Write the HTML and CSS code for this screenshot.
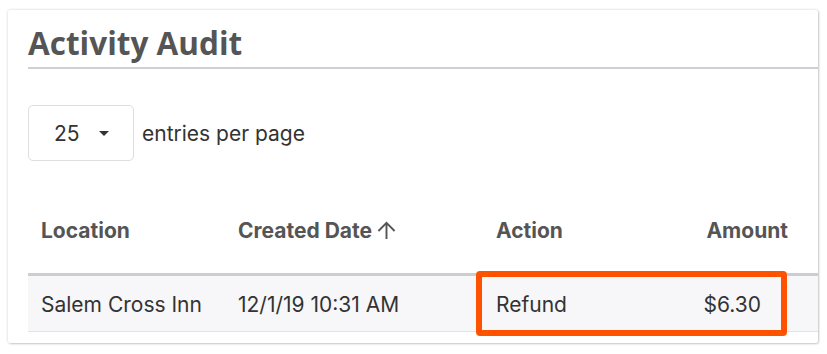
FILE: index.html
```html
<!DOCTYPE html>
<html lang="en">
<head>
    <meta charset="UTF-8">
    <meta name="viewport" content="width=device-width, initial-scale=1.0">
    <title>Activity Audit</title>
    <link rel="stylesheet" href="styles.css">
</head>
<body>
    <div class="card">
        <h1 class="card-title">Activity Audit</h1>
        <div class="page-size">
            <div class="select">
                <span>25</span>
                <span class="caret"></span>
            </div>
            <span class="page-size-label">entries per page</span>
        </div>
        <div class="audit-table">
            <div class="audit-row head">
                <div class="cell">Location</div>
                <div class="cell">Created Date <svg class="sort-icon" viewBox="0 0 20 20"><path d="M10 19V2M1.5 10.5L10 2L18.5 10.5" fill="none" stroke="#555" stroke-width="2"/></svg></div>
                <div class="cell">Action</div>
                <div class="cell amount">Amount</div>
            </div>
            <div class="audit-row body">
                <div class="cell">Salem Cross Inn</div>
                <div class="cell">12/1/19 10:31 AM</div>
                <div class="cell">Refund</div>
                <div class="cell amount">$6.30</div>
                <div class="highlight"></div>
            </div>
        </div>
    </div>
</body>
</html>
```

FILE: styles.css
```css
body {
    margin: 0;
    padding: 10px 9px 11px 8px;
    background-color: #fff;
    font-family: 'Inter', 'Liberation Sans', sans-serif;
    color: #333;
}
.card {
    height: 333px;
    box-sizing: border-box;
    padding: 0 0 0 20px;
    background-color: #fff;
    box-shadow: 0 0 3px rgba(0, 0, 0, 0.18), 1px 1px 2px rgba(0, 0, 0, 0.15);
    border-radius: 2px;
}
.card-title {
    margin: 0;
    padding: 15px 0 6px 0;
    font-family: 'Open Sans', 'Liberation Sans', sans-serif;
    font-size: 31.5px;
    font-weight: 700;
    line-height: 36px;
    color: #555;
    border-bottom: 2px solid #cfcfd6;
}
.page-size {
    display: flex;
    align-items: center;
    margin-top: 36px;
}
.select {
    width: 106px;
    height: 56px;
    box-sizing: border-box;
    border: 1px solid #dddde2;
    border-radius: 5px;
    display: flex;
    align-items: center;
    padding-left: 25px;
    font-size: 21px;
    color: #333;
}
.caret {
    margin-left: 19px;
    width: 0;
    height: 0;
    border-left: 5px solid transparent;
    border-right: 5px solid transparent;
    border-top: 5px solid #333;
}
.page-size-label {
    margin-left: 8px;
    font-size: 21px;
    color: #333;
}
.audit-table {
    margin-top: 44px;
}
.audit-row {
    display: grid;
    grid-template-columns: 197px 258px 1fr 200px;
    position: relative;
}
.audit-row .cell {
    padding-left: 13px;
    display: flex;
    align-items: center;
    line-height: 26px;
}
.audit-row.head {
    height: 55px;
    padding-top: 13px;
    align-items: start;
    border-bottom: 3px solid #cdcdd1;
    font-weight: 700;
    font-size: 21px;
    color: #555;
}
.audit-row.head .amount {
    justify-content: flex-end;
    padding-right: 30px;
}
.sort-icon {
    width: 19px;
    height: 19px;
    flex-shrink: 0;
    margin-left: 5px;
    margin-top: -2px;
}
.audit-row.body {
    height: 52px;
    padding-top: 3px;
    align-items: center;
    background-color: #f7f7f9;
    border-bottom: 1px solid #e3e3e6;
    font-size: 21px;
    color: #333;
}
.audit-row.body .amount {
    justify-content: flex-end;
    padding-right: 57px;
}
.highlight {
    position: absolute;
    left: 448px;
    top: -5px;
    width: 311px;
    height: 65px;
    box-sizing: border-box;
    border: 6px solid #ff5200;
    border-radius: 4px;
}
```
